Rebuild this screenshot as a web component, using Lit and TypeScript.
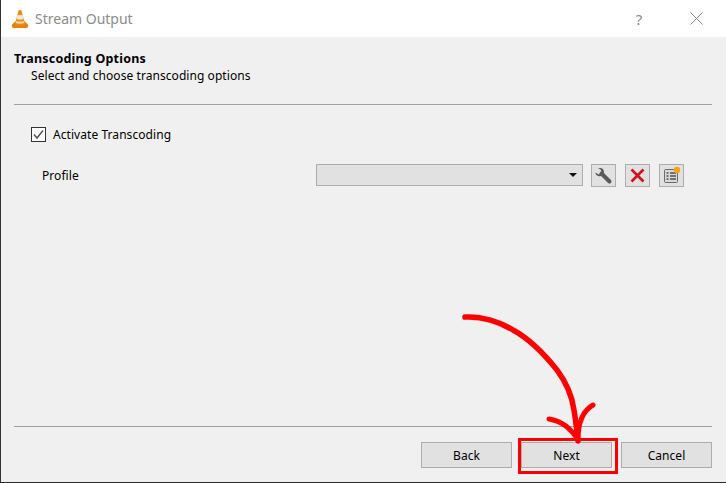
import { LitElement, html, css } from "lit";
import { customElement } from "lit/decorators.js";

@customElement("app-root")
export class AppRoot extends LitElement {
  static styles = css`
    :host {
      display: block;
      position: relative;
      width: 726px;
      height: 483px;
      overflow: hidden;
      font-family: "Noto Sans", "Open Sans", sans-serif;
      font-size: 12px;
      letter-spacing: 0.06px;
      color: #000;
      background: #f0f0f0;
    }
    .window {
      box-sizing: border-box;
      height: 483px;
      border-left: 1px solid #333;
      border-bottom: 1px solid #2a2a2a;
      display: flex;
      flex-direction: column;
    }
    .titlebar {
      height: 37px;
      flex: none;
      background: #fff;
      display: flex;
      align-items: center;
      padding-left: 10px;
      color: #8c8c8c;
      font-size: 14px;
      letter-spacing: 0;
    }
    .titlebar .cone { margin-right: 6px; flex: none; }
    .titlebar .title { flex: 1; }
    .help { width: 14px; text-align: center; margin-right: 44px; font-size: 15px; color: #8a8a8a; }
    .close { margin-right: 23px; flex: none; }
    .content {
      flex: 1;
      display: flex;
      flex-direction: column;
      padding: 0 14px 0 13px;
    }
    .heading { margin-top: 13px; font-weight: 700; line-height: 17px; font-size: 12.5px; letter-spacing: 0.2px; }
    .sub { margin-left: 17px; line-height: 17px; }
    .sep { height: 1px; background: #a0a0a0; flex: none; }
    .sep.top { margin-top: 20px; }
    .check-row {
      display: flex;
      align-items: center;
      gap: 7px;
      margin: 21px 0 0 17px;
      height: 17px;
    }
    .check {
      box-sizing: border-box;
      width: 15px;
      height: 15px;
      border: 1px solid #333;
      background: #fff;
      display: flex;
    }
    .profile {
      display: flex;
      align-items: center;
      margin: 21px 0 0 28px;
      height: 22px;
    }
    .profile .label { width: 274px; flex: none; }
    .combo {
      box-sizing: border-box;
      width: 267px;
      height: 22px;
      border: 1px solid #adadad;
      background: #e1e1e1;
      display: flex;
      align-items: center;
      justify-content: flex-end;
      padding-right: 5px;
    }
    .arrow-down {
      width: 0;
      height: 0;
      border-left: 4px solid transparent;
      border-right: 4px solid transparent;
      border-top: 4px solid #111;
    }
    .tool {
      box-sizing: border-box;
      width: 25px;
      height: 23px;
      border: 1px solid #adadad;
      background: #e1e1e1;
      display: flex;
      align-items: center;
      justify-content: center;
      flex: none;
    }
    .t1 { margin-left: 8px; }
    .t2 { margin-left: 9px; }
    .spacer { flex: 1; }
    .footer {
      display: flex;
      justify-content: flex-end;
      gap: 9px;
      margin-top: 15px;
      margin-bottom: 14px;
    }
    .btn {
      box-sizing: border-box;
      width: 91px;
      height: 26px;
      border: 1px solid #adadad;
      background: #e1e1e1;
      display: flex;
      align-items: center;
      justify-content: center;
    }
    .next-mark {
      position: absolute;
      left: 518px;
      top: 438px;
      width: 100px;
      height: 36px;
      box-sizing: border-box;
      border: 3px solid #f00;
    }
    .ink {
      position: absolute;
      left: 0;
      top: 0;
      pointer-events: none;
    }
  `;

  render() {
    return html`
      <div class="window">
        <div class="titlebar">
          <svg class="cone" width="18" height="20" viewBox="0 0 18 20">
            <path d="M.8 16 L4 12.5 H14 L17.2 16 Q17.5 19 15 19 H3 Q.5 19 .8 16 Z" fill="#e8800a"/>
            <path d="M7.5 1.5 Q9 .4 10.5 1.5 L14 15 Q9 17.5 4 15 Z" fill="#f28a08"/>
            <path d="M6.6 5.5 Q9 6.6 11.4 5.5 L12.4 10 Q9 11.3 5.6 10 Z" fill="#eee8dc"/>
            <path d="M5.1 12 L4.6 14 Q9 15.6 13.4 14 L12.9 12 Q9 13 5.1 12 Z" fill="#ded7ca"/>
          </svg>
          <span class="title">Stream Output</span>
          <span class="help">?</span>
          <svg class="close" width="13" height="13" viewBox="0 0 13 13">
            <path d="M.5 .5 L12.5 12.5 M12.5 .5 L.5 12.5" stroke="#8a8a8a" stroke-width="1" fill="none"/>
          </svg>
        </div>
        <div class="content">
          <div class="heading">Transcoding Options</div>
          <div class="sub">Select and choose transcoding options</div>
          <div class="sep top"></div>
          <div class="check-row">
            <span class="check">
              <svg width="13" height="13" viewBox="0 0 13 13">
                <path d="M2 6.5 L5 10 L11 2.5" stroke="#555" stroke-width="1.5" fill="none"/>
              </svg>
            </span>
            <span>Activate Transcoding</span>
          </div>
          <div class="profile">
            <span class="label">Profile</span>
            <div class="combo"><span class="arrow-down"></span></div>
            <div class="tool t1">
              <svg width="19" height="19" viewBox="0 0 19 19">
                <path d="M7.5 7.5 L15.5 15.5" stroke="#5a5a5a" stroke-width="4" stroke-linecap="round" fill="none"/>
                <path d="M1.5 6.5 L4.6 8.6 L7.6 6.6 L6.6 3.6 L4 2.6 C6.5 1 10 2.4 10 6 C10 9.2 7 11 4.2 10 C2.5 9.4 1.4 8.2 1.5 6.5 Z" fill="#5a5a5a"/>
              </svg>
            </div>
            <div class="tool t2">
              <svg width="15" height="15" viewBox="0 0 15 15">
                <path d="M1.5 1.5 L13.5 13.5 M13.5 1.5 L1.5 13.5" stroke="#d0101c" stroke-width="2.6" fill="none"/>
              </svg>
            </div>
            <div class="tool t2">
              <svg width="19" height="19" viewBox="0 0 19 19">
                <rect x="2.5" y="3.5" width="13" height="13" rx="1" fill="#d8d8d8" stroke="#6a6a6a"/>
                <path d="M4.5 7 H6.5 M8 7 H14 M4.5 10 H6.5 M8 10 H14 M4.5 13 H6.5 M8 13 H14" stroke="#505050" stroke-width="1.4"/>
                <circle cx="15" cy="4" r="3.2" fill="#f9a11b"/>
              </svg>
            </div>
          </div>
          <div class="spacer"></div>
          <div class="sep"></div>
          <div class="footer">
            <div class="btn">Back</div>
            <div class="btn">Next</div>
            <div class="btn">Cancel</div>
          </div>
        </div>
      </div>
      <div class="next-mark"></div>
      <svg class="ink" width="726" height="483" viewBox="0 0 726 483">
        <path d="M465 317 C482 316 500 322 513 330 C528 338 545 355 557 370 C566 382 572 396 574 410 C576 422 577 432 578 441" stroke="#f00" stroke-width="5.5" fill="none" stroke-linecap="round"/>
        <path d="M593 405 C584 410 578 420 578 440 C572 430 562 421 549 419" stroke="#f00" stroke-width="5" fill="none" stroke-linecap="round" stroke-linejoin="round"/>
      </svg>
    `;
  }
}
